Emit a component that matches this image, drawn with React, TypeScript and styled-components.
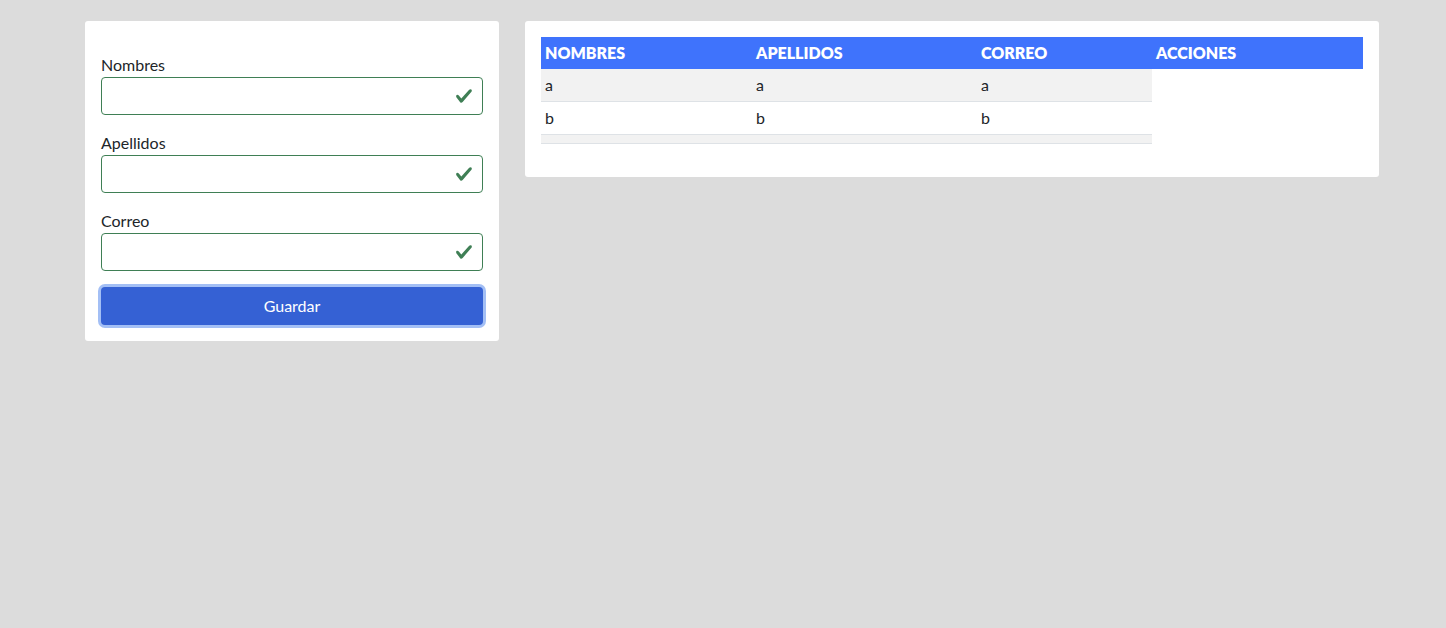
import React from "react";
import styled, { createGlobalStyle } from "styled-components";

const Global = createGlobalStyle`
  html, body { margin: 0; padding: 0; }
  body {
    background: #dcdcdc;
    font-family: "Segoe UI", "Lato", "Noto Sans", sans-serif;
    font-size: 16px;
    line-height: 24px;
    color: #212529;
  }
`;

const Page = styled.div`
  display: flex;
  align-items: flex-start;
  gap: 26px;
  padding: 21px 0 0 85px;
`;

const Card = styled.div<{ $w: number }>`
  width: ${(p) => p.$w}px;
  box-sizing: border-box;
  background: #fff;
  border-radius: 3px;
`;

const FormCard = styled(Card)`
  padding: 32px 16px 16px;
`;

const TableCard = styled(Card)`
  padding: 16px 16px 33px;
`;

const Group = styled.div`
  display: flex;
  flex-direction: column;
  margin-bottom: 16px;
`;

const Label = styled.label`
  font-size: 16px;
  line-height: 24px;
  color: #212529;
`;

const InputWrap = styled.div`
  position: relative;
  height: 38px;
  box-sizing: border-box;
  border: 1px solid #3f7f55;
  border-radius: 4px;
  background: #fff;
`;

const Input = styled.input`
  width: 100%;
  height: 100%;
  box-sizing: border-box;
  border: none;
  outline: none;
  background: transparent;
  padding: 6px 40px 6px 12px;
  font: inherit;
`;

const Check = styled.svg`
  position: absolute;
  right: 9px;
  top: 9px;
  width: 18px;
  height: 18px;
`;

const Button = styled.button`
  width: 100%;
  height: 38px;
  border: none;
  border-radius: 4px;
  background: #3561d4;
  color: #fff;
  font: inherit;
  font-size: 16px;
  box-shadow: 0 0 0 3px #a3bff5;
  cursor: pointer;
`;

const Table = styled.table`
  width: 822px;
  border-collapse: separate;
  border-spacing: 0;
  table-layout: fixed;
`;

const Th = styled.th<{ $w: number }>`
  width: ${(p) => p.$w}px;
  box-sizing: border-box;
  background: #3f73fc;
  color: #fff;
  text-align: left;
  font-weight: 800;
  font-size: 16px;
  line-height: 24px;
  padding: 4px;
`;

const Row = styled.tr<{ $striped?: boolean }>`
  & > td {
    background: ${(p) => (p.$striped ? "#f2f2f2" : "#fff")};
  }
`;

const Td = styled.td`
  padding: 4px;
  font-size: 16px;
  line-height: 24px;
  border-bottom: 1px solid #dee2e6;
  color: #212529;
`;

const CheckIcon = () => (
  <Check viewBox="0 0 8 8">
    <path
      fill="#3f7f55"
      d="M2.3 6.73.6 4.53c-.4-1.04.46-1.4 1.1-.8l1.1 1.4 3.4-3.8c.6-.63 1.6-.27 1.2.7l-4 4.6c-.43.5-.8.4-1.1.1z"
    />
  </Check>
);

const fields = ["Nombres", "Apellidos", "Correo"];
const rows = [
  ["a", "a", "a"],
  ["b", "b", "b"],
  ["", "", ""],
];

export default function App() {
  return (
    <>
      <Global />
      <Page>
        <FormCard $w={414}>
          {fields.map((f) => (
            <Group key={f}>
              <Label>{f}</Label>
              <InputWrap>
                <Input />
                <CheckIcon />
              </InputWrap>
            </Group>
          ))}
          <Button>Guardar</Button>
        </FormCard>
        <TableCard $w={854}>
          <Table>
            <thead>
              <tr>
                <Th $w={211}>NOMBRES</Th>
                <Th $w={225}>APELLIDOS</Th>
                <Th $w={175}>CORREO</Th>
                <Th $w={211}>ACCIONES</Th>
              </tr>
            </thead>
            <tbody>
              {rows.map((r, i) => (
                <Row key={i} $striped={i % 2 === 0}>
                  {r.map((c, j) => (
                    <Td key={j}>{c}</Td>
                  ))}
                </Row>
              ))}
            </tbody>
          </Table>
        </TableCard>
      </Page>
    </>
  );
}
